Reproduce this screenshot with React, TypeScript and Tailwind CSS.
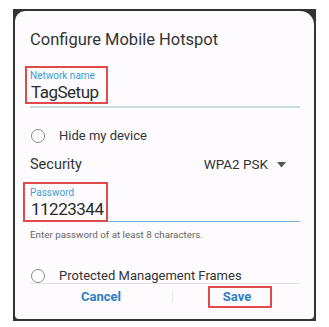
export default function App() {
  const font = { fontFamily: "Roboto, 'Liberation Sans', sans-serif" };
  return (
    <div className="w-[329px] h-[327px] bg-white pt-[9px] pl-[13px]" style={font}>
      <div className="w-[303px] h-[312px] bg-[#333333] p-[2px]">
        <div className="h-full bg-[#fdfbfe] rounded-tl-[10px] rounded-tr-[14px] rounded-b-[4px] flex flex-col overflow-hidden">
          <h1 className="pl-[15px] pt-[19px] text-[16.5px] leading-[20px] text-[#333]">Configure Mobile Hotspot</h1>

          <div className="pl-[15px] pr-[14px] h-[234px] shrink-0 overflow-hidden relative">
            {/* network name */}
            <div className="relative mt-[20px] w-fit">
              <div className="text-[10px] leading-[12px] text-[#3f9dcf]">Network name</div>
              <div className="text-[17px] leading-[20px] tracking-[-0.5px] text-[#2b2b2b] pl-[1px]">TagSetup</div>
              <span className="absolute -top-[4px] -left-[5px] w-[83px] h-[38px] border-2 border-[#e04a4a]" />
            </div>
            <div className="h-[1.5px] bg-[#c9dcdc] mt-[4px]" />

            <div className="flex items-center h-[20px] mt-[18px]">
              <span className="w-[14px] h-[14px] rounded-full border-[1.5px] border-[#8a8a8a] ml-[1px]" />
              <span className="ml-[14px] text-[13px] text-[#333]">Hide my device</span>
            </div>

            <div className="flex items-center h-[20px] mt-[9px]">
              <span className="text-[14.5px] text-[#333]">Security</span>
              <span className="ml-auto text-[13.5px] text-[#333]">WPA2 PSK</span>
              <svg width="9" height="6" viewBox="0 0 9 6" className="ml-[9px] mr-[14px]">
                <polygon points="0,0 9,0 4.5,5.5" fill="#555" />
              </svg>
            </div>

            {/* password */}
            <div className="relative mt-[12px] w-fit">
              <div className="text-[10px] leading-[12px] text-[#3f9dcf]">Password</div>
              <div className="text-[17px] leading-[20px] tracking-[-0.5px] text-[#2b2b2b] pl-[1px]">11223344</div>
              <span className="absolute -top-[5px] -left-[7px] w-[85px] h-[40px] border-2 border-[#e04a4a]" />
            </div>
            <div className="h-[1.5px] bg-[#72b5d6] mt-[2px]" />
            <div className="text-[9.8px] leading-[12px] text-[#666] mt-[7px]">Enter password of at least 8 characters.</div>

            <div className="flex items-center h-[20px] mt-[25px]">
              <span className="w-[14px] h-[14px] rounded-full border-[1.5px] border-[#8a8a8a] ml-[1px]" />
              <span className="ml-[14px] text-[13px] leading-[16px] text-[#333]">Protected Management Frames</span>
            </div>
            <div className="absolute bottom-0 left-[15px] right-[14px] h-px bg-[#e3e1e3]" />
          </div>

          <div className="flex items-center h-[25px] pl-[15px]">
            <div className="w-[142px] flex justify-center">
              <span className="text-[13px] font-bold text-[#2f7fc2]">Cancel</span>
            </div>
            <div className="w-px h-[11px] bg-[#e6e4e6]" />
            <div className="w-[128px] flex justify-center">
              <span className="relative text-[13px] leading-[20px] font-bold text-[#2f7fc2]">
                Save
                <span className="absolute -top-[1px] -left-[15px] -right-[21px] h-[22px] border-2 border-[#e04a4a]" />
              </span>
            </div>
          </div>
        </div>
      </div>
    </div>
  );
}
